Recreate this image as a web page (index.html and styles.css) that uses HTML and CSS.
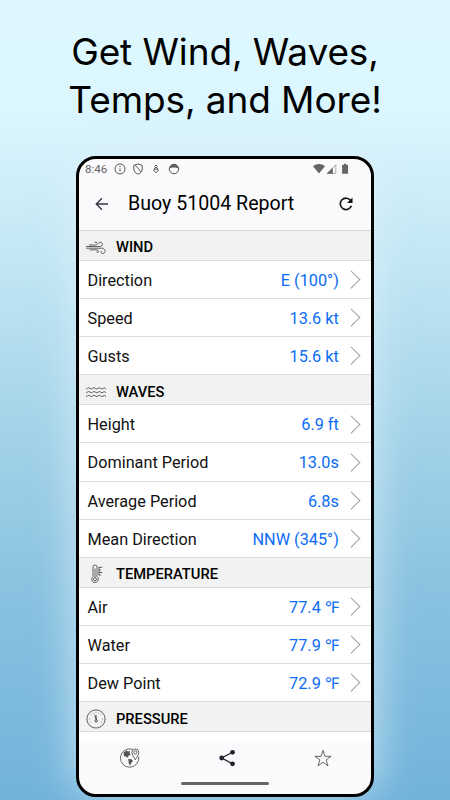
FILE: index.html
```html
<!DOCTYPE html>
<html lang="en">

<head>
    <meta charset="UTF-8">
    <meta name="viewport" content="width=device-width, initial-scale=1.0">
    <title>Buoy Report</title>
    <link rel="stylesheet" href="styles.css">
</head>

<body>
    <h1 class="headline">Get Wind, Waves,<br>Temps, and More!</h1>

    <div class="phone">
        <div class="status">
            <span class="time">8:46</span>
            <svg class="note" viewBox="0 0 12 12">
                <circle cx="6" cy="6" r="5" />
                <path d="M6 5.3v3.4M6 3v1.2" />
            </svg>
            <svg class="note" viewBox="0 0 12 12">
                <path d="M6 .9L10.2 2.4V6c0 2.3-1.6 4.2-4.2 5.2C3.4 10.2 1.8 8.3 1.8 6V2.4zM3.5 2.2c.4 2.3 3.2 2.2 3.4 4.2.1 1.2 1 1.8 2 1.8" />
            </svg>
            <svg class="note" viewBox="0 0 12 12">
                <path d="M4.4 3.5L6 2 7.6 3.5M3.8 6L6 4 8.2 6" />
                <path d="M3.5 7.2L6 5.8l2.5 1.4L6 9.8z" />
            </svg>
            <svg class="note" viewBox="0 0 12 12">
                <circle cx="6" cy="6" r="4.7" />
                <path class="solid" d="M2.2 4.8C2.8 2.5 4.5 1.5 6 1.5s3.2 1 3.8 3.3L8 4H4z" />
            </svg>
            <svg class="signals" viewBox="0 0 37 12">
                <path d="M0 3.2C3.5.3 8.5.3 12 3.2L6 10.6z" />
                <path class="thin" d="M14.3 10.4L22.8 1.8V10.4z" />
                <path d="M13.7 10.7L19.8 4.6V10.7z" />
                <path d="M29.1 1.9h1.7V.8h2.6v1.1h1.7v8.9h-6z" />
            </svg>
        </div>

        <div class="bar">
            <svg class="back" viewBox="0 0 14 14">
                <path d="M13 7H1.5M7 1.3L1.3 7 7 12.7" />
            </svg>
            <span class="title">Buoy 51004 Report</span>
            <svg class="refresh" viewBox="0 0 14 14">
                <path d="M11.6 3.5A5.7 5.7 0 1 0 12.4 8.7" />
                <path class="tip" d="M13.5.6V6H8.1z" />
            </svg>
        </div>

        <div class="list">
            <div class="section">
                <svg class="icon" viewBox="0 0 20 20">
                    <path d="M0 9.500h13.500c4 0 3.500-4.300.8-4.300-1.300 0-1.700.9-1.300 1.600M3 8h6.500c2.600 0 2-2.900.3-2.900-.8 0-1.100.4-1.100.9" />
                    <path d="M0 11.200h15.500c4.600 0 4.500 5.300 1.200 5.300-1.700 0-2-1.600-1-2.200M3.500 12.800h6.500c3 0 3.300 2.600 1.600 2.600-.7 0-1-.4-.9-.9" />
                </svg>
                <span>WIND</span>
            </div>
            <div class="row"><span>Direction</span><b>E (100°)</b><i></i></div>
            <div class="row"><span>Speed</span><b>13.6 kt</b><i></i></div>
            <div class="row"><span>Gusts</span><b>15.6 kt</b><i></i></div>

            <div class="section">
                <svg class="icon" viewBox="0 0 20 20">
                    <path d="M0 7c1.500 0 1.300-1.300 2.500-1.300S4.300 7 5.500 7 6.800 5.700 8 5.700 9.600 7 10.800 7s1.300-1.300 2.500-1.300S14.800 7 16 7s1.200-1.300 2.200-1.300S19 7 20 7" />
                    <path d="M0 10.800c1.500 0 1.300-1.300 2.500-1.300s1.800 1.300 3 1.300S6.800 9.500 8 9.500s1.600 1.300 2.800 1.300 1.300-1.300 2.500-1.300 1.500 1.300 2.700 1.300 1.200-1.300 2.200-1.300.8 1.300 1.800 1.300" />
                    <path d="M0 14.600c1.500 0 1.300-1.300 2.500-1.300s1.800 1.300 3 1.300 1.300-1.300 2.500-1.300 1.600 1.300 2.800 1.300 1.300-1.300 2.500-1.300 1.500 1.300 2.700 1.300 1.200-1.300 2.200-1.300.8 1.300 1.800 1.300" />
                </svg>
                <span>WAVES</span>
            </div>
            <div class="row"><span>Height</span><b>6.9 ft</b><i></i></div>
            <div class="row"><span>Dominant Period</span><b>13.0s</b><i></i></div>
            <div class="row"><span>Average Period</span><b>6.8s</b><i></i></div>
            <div class="row"><span>Mean Direction</span><b>NNW (345°)</b><i></i></div>

            <div class="section">
                <svg class="icon" viewBox="0 0 20 20">
                    <path d="M7 12.5V3a2 2 0 0 1 4 0v9.500a3.300 3.300 0 1 1-4 0zM9 4.500v9" />
                    <circle cx="9" cy="15.2" r="1.5" />
                    <path d="M12.7 3.300h3.600M12.700 6h2.300M12.700 8.500h3.600M12.700 11h2.300M13 3v8" />
                </svg>
                <span>TEMPERATURE</span>
            </div>
            <div class="row"><span>Air</span><b>77.4 ℉</b><i></i></div>
            <div class="row"><span>Water</span><b>77.9 ℉</b><i></i></div>
            <div class="row"><span>Dew Point</span><b>72.9 ℉</b><i></i></div>

            <div class="section">
                <svg class="icon" viewBox="0 0 20 20">
                    <circle cx="10" cy="10" r="9.1" />
                    <circle cx="10.2" cy="12" r="1.2" />
                    <path d="M9.900 10.800L8.800 5.800M10.500 10.800L10 6" />
                    <path class="ticks" d="M3 10h1M16 10h1M4.800 5.200l.7.700M14.500 5.900l.7-.7M10 2.800v1M4.300 13.300l.8-.4M14.900 12.900l.8.400M7 3.800l.4.800M13 3.800l-.4.800" />
                </svg>
                <span>PRESSURE</span>
            </div>
        </div>

        <div class="tabs">
            <svg viewBox="0 0 20 20">
                <path class="line" d="M12.500 1.300A9.200 9.200 0 1 0 18.700 8.500" />
                <path class="land" d="M3.500 4.500l3-2 1.500 1 2-.5-.4 2.400 1.500 1-2 .9-1.600 2.500-1.600-1.300L4 8.200zM8.200 11l3.500.3 1.200 2-1.800 1.800-.8 2.600-1.500-2.200z" />
                <path class="line" d="M15.300 11.800C13.500 8.900 11.900 6.500 11.900 4.300a3.400 3.400 0 0 1 6.800 0c0 2.200-1.600 4.600-3.400 7.500z" />
                <circle class="line" cx="15.3" cy="4.4" r="1.6" />
            </svg>
            <svg viewBox="0 0 20 20">
                <path class="link" d="M15.500 4.300L4.700 10l10.800 5.800" />
                <circle cx="4.7" cy="10" r="2.4" />
                <circle cx="15.5" cy="4.3" r="2.4" />
                <circle cx="15.5" cy="15.8" r="2.4" />
            </svg>
            <svg viewBox="0 0 20 20">
                <path class="line" d="M10 2.400l1.900 5.900h6.200l-5 3.600 1.900 5.900-5-3.600-5 3.600 1.900-5.900-5-3.600h6.200z" />
            </svg>
        </div>
        <div class="home"></div>
    </div>
</body>

</html>
```

FILE: styles.css
```css
* {
    margin: 0;
    padding: 0;
    box-sizing: border-box;
}

body {
    height: 800px;
    padding-top: 28px;
    overflow: hidden;
    font-family: Roboto, "Liberation Sans", sans-serif;
    background: linear-gradient(#dff8ff 0, #dbf6fe 14%, #c3e7f4 32%, #a4d4e9 53%, #8cc3e1 72%, #72b3da 100%);
}

.headline {
    height: 127.5px;
    text-align: center;
    font-family: Inter, sans-serif;
    font-size: 37px;
    font-weight: 400;
    line-height: 48px;
    letter-spacing: -0.1px;
}

.phone {
    display: flex;
    flex-direction: column;
    width: 298px;
    height: 641px;
    margin: 0 auto;
    border: 3px solid #000;
    border-radius: 20px;
    overflow: hidden;
    background-color: #fafafd;
    box-shadow: 0 -6px 42px 2px rgba(222, 240, 251, 0.75);
}

svg {
    display: block;
    fill: none;
    stroke: #222;
}

.status {
    display: flex;
    align-items: center;
    height: 20px;
    padding: 0 21px 0 6px;
}

.time {
    width: 29px;
    padding-top: 1px;
    font-size: 11.6px;
    color: #666;
}

.note {
    width: 12px;
    height: 12px;
    margin-right: 6px;
    stroke: #555;
}

.note .solid {
    fill: #666;
}

.signals {
    width: 37px;
    height: 12px;
    margin-left: auto;
    fill: #666;
    stroke: none;
}

.signals .thin {
    fill: none;
    stroke: #777;
    stroke-width: 0.6;
}

.bar {
    display: flex;
    align-items: center;
    height: 51.4px;
    padding: 0 18.5px 0 15.5px;
}

.back {
    width: 14px;
    height: 14px;
    stroke: #334;
    stroke-width: 1.4;
}

.title {
    margin: -2px 0 0 19.5px;
    font-size: 19.6px;
}

.refresh {
    width: 14px;
    height: 14px;
    margin-left: auto;
    stroke: #111;
    stroke-width: 1.6;
}

.refresh .tip {
    fill: #111;
    stroke: none;
}

.list {
    height: 511px;
    background-color: #fff;
    border-top: 1px solid #d9d9da;
}

.section {
    display: flex;
    align-items: center;
    height: 30.2px;
    padding: 4px 0 0 7px;
    border-bottom: 1px solid #dadada;
    background-color: #f2f2f2;
    font-size: 14.7px;
    font-weight: 500;
}

.icon {
    width: 20px;
    height: 20px;
    margin-right: 10px;
    stroke-width: 0.7;
}

.ticks {
    stroke-width: 0.5;
}

.row {
    display: flex;
    align-items: center;
    height: 38.05px;
    padding: 2px 14px 0 8.5px;
    border-bottom: 1px solid #dcdcdc;
    font-size: 16.25px;
    color: #111;
}

.row b {
    margin-left: auto;
    font-weight: 400;
    color: #0a6cf5;
}

/* chevron */
.row i {
    width: 12.5px;
    height: 12.5px;
    margin: -2px 0 0 5.7px;
    border: solid #999;
    border-width: 1px 1px 0 0;
    transform: rotate(45deg);
}

.tabs {
    display: flex;
    justify-content: space-between;
    align-items: center;
    height: 33px;
    padding: 1px 38px 0 41px;
    background-color: #fafafd;
}

.tabs svg {
    width: 20px;
    height: 20px;
    fill: #22222e;
    stroke: none;
}

.tabs .line {
    fill: none;
    stroke: #444;
    stroke-width: 0.8;
}

.tabs .land {
    fill: #555;
}

.tabs .link {
    fill: none;
    stroke: #22222e;
    stroke-width: 1.3;
}

.home {
    width: 88px;
    height: 3px;
    margin: 8px auto 0;
    border-radius: 2px;
    background-color: #666;
}
```
